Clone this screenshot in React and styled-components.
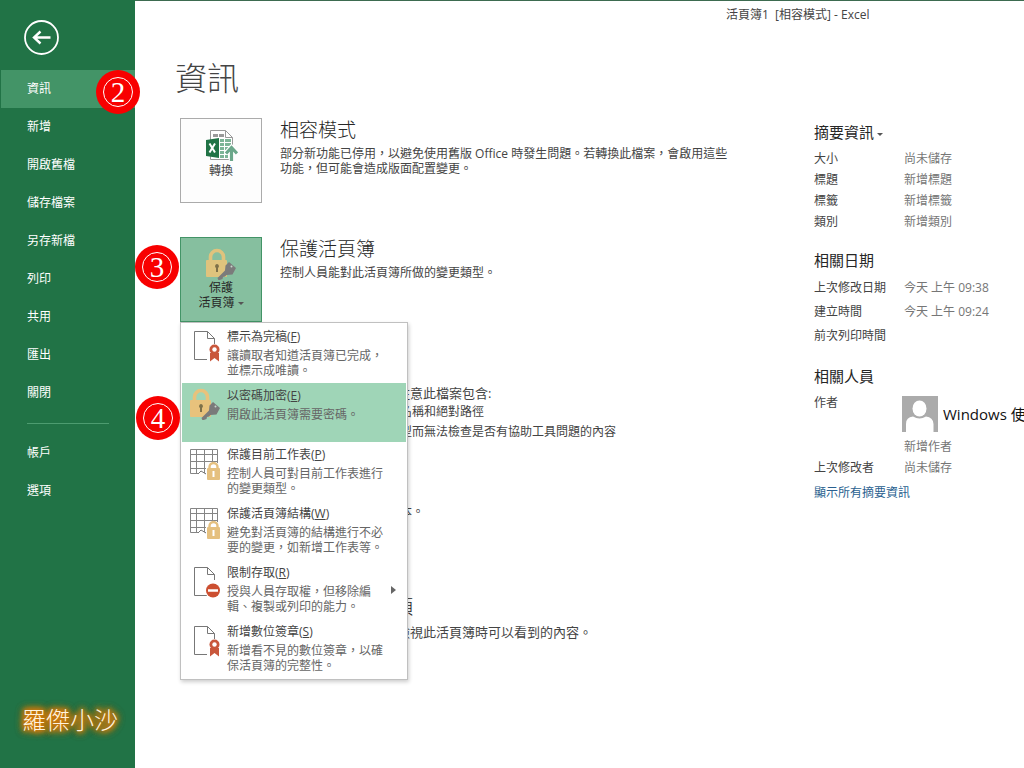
import React from "react";
import styled, { createGlobalStyle } from "styled-components";

const GlobalStyle = createGlobalStyle`
  * { box-sizing: border-box; }
  body {
    margin: 0;
    background: #fff;
    color: #444;
    font: 12px/15px "Open Sans", "Noto Sans CJK TC", sans-serif;
  }
  h1, h2, h3, p, ul, dl, dd { margin: 0; padding: 0; }
  ul { list-style: none; }
  button { font: inherit; color: inherit; cursor: pointer; }
`;

const Window = styled.div`
  display: flex;
  min-height: 100vh;
  overflow: hidden;
`;

const Sidebar = styled.aside`
  flex: 0 0 135px;
  display: flex;
  flex-direction: column;
  background: #217346;
  color: #fff;
`;

const BackButton = styled.button`
  display: block;
  width: 36px;
  height: 36px;
  margin: 19px 0 15px 23px;
  padding: 0;
  border: 0;
  background: none;
`;

const NavItem = styled.li`
  position: relative;
  margin-left: 1px;
`;

const NavButton = styled.button`
  display: block;
  width: 100%;
  height: 38px;
  padding: 0 0 2px 26px;
  border: 0;
  text-align: left;
  background: ${(p) => (p.$active ? "#439467" : "transparent")};
`;

const NavDivider = styled.li`
  height: 1px;
  margin: 11px 26px 10px 27px;
  background: #4d9c70;
`;

const Watermark = styled.div`
  margin: auto 0 30px 22px;
  color: #fff3dc;
  font-size: 24px;
  line-height: 36px;
  font-weight: 300;
  text-shadow: 0 0 5px #d47a0c, 0 0 5px #d47a0c, 0 0 6px #d47a0c, 0 0 6px #d47a0c,
    0 0 8px #d47a0c, 0 0 8px #d47a0c, 0 0 10px #d47a0c;
`;

const Main = styled.main`
  flex: 1;
  min-width: 0;
  border-top: 1px solid #3d6b50;
`;

const TitleBar = styled.header`
  height: 28px;
  padding-left: 591px;
  line-height: 28px;
  white-space: pre;
`;

const PageTitle = styled.h1`
  margin: 29px 0 20px 40px;
  font-size: 32px;
  line-height: 40px;
  font-weight: 300;
`;

const Columns = styled.div`
  display: flex;
  padding-left: 45px;
`;

const Sections = styled.div`
  flex: 1;
  min-width: 0;
  display: flex;
  flex-direction: column;
  gap: 34px;
`;

const Section = styled.section`
  display: grid;
  grid-template-columns: 82px minmax(0, 452px);
  column-gap: 18px;
  min-height: 85px;
`;

const TileHolder = styled.div`
  position: relative;
`;

const SectionBody = styled.div`
  grid-column: 2;
`;

const SectionTitle = styled.h2`
  margin-bottom: 4px;
  color: #262626;
  font-size: 19px;
  line-height: 24px;
  font-weight: 300;
`;

const LargeText = styled.p`
  font-size: 13px;
  line-height: 18px;
`;

const Findings = styled.ul`
  padding-left: 12px;
  line-height: 20px;
`;

const Tile = styled.button`
  display: flex;
  flex-direction: column;
  align-items: center;
  width: 82px;
  height: 85px;
  padding: 10px 0 0;
  border: 1px solid ${(p) => (p.$pressed ? "#439467" : "#ababab")};
  background: ${(p) => (p.$pressed ? "#86bf9f" : "#fdfdfd")};
  color: ${(p) => (p.$pressed ? "#262626" : "#444")};
`;

const Caret = styled.span`
  display: inline-block;
  margin-left: 3px;
  vertical-align: 2px;
  border: 3px solid transparent;
  border-top-color: #555;
  border-bottom: 0;
`;

const Badge = styled.span`
  position: absolute;
  z-index: 3;
  left: ${(p) => p.$left}px;
  top: ${(p) => p.$top}px;
  display: flex;
  align-items: center;
  justify-content: center;
  width: 44px;
  height: 44px;
  border-radius: 50%;
  background: #f80000;
  color: #fff;
`;

const BadgeRing = styled.span`
  width: 30px;
  height: 30px;
  border: 1px solid #fff;
  border-radius: 50%;
  font: 29px/28px "Liberation Serif", serif;
  text-align: center;
`;

const Menu = styled.ul`
  position: absolute;
  z-index: 2;
  top: 85px;
  left: 0;
  width: 228px;
  padding: 1px;
  border: 1px solid #c0c0c0;
  background: #fff;
  box-shadow: 1px 2px 4px rgba(0, 0, 0, 0.2);
`;

const MenuItem = styled.li`
  position: relative;
`;

const MenuButton = styled.button`
  display: grid;
  grid-template-columns: 32px 158px 1fr;
  column-gap: 6px;
  width: 100%;
  height: 59px;
  padding: 5px 0 0 7px;
  border: 0;
  align-items: start;
  text-align: left;
  background: ${(p) => (p.$selected ? "#9fd5b7" : "transparent")};
`;

const MenuTitle = styled.span`
  display: block;
  margin-bottom: 3px;
  line-height: 16px;
`;

const MenuText = styled.span`
  display: block;
  color: #666;
`;

const SubArrow = styled.span`
  align-self: center;
  justify-self: start;
  margin-bottom: 4px;
  border: 4px solid transparent;
  border-left: 5px solid #666;
  border-right: 0;
`;

const Summary = styled.aside`
  flex: 0 0 210px;
  min-width: 0;
  padding-top: 4px;
  overflow: hidden;
`;

const SummaryTitle = styled.h3`
  margin-bottom: 6px;
  color: #262626;
  font-size: 15px;
  line-height: 20px;
  font-weight: 400;
`;

const Facts = styled.dl`
  display: grid;
  grid-template-columns: 88px 1fr;
  margin-bottom: 18px;
  line-height: ${(p) => p.$row}px;
  white-space: nowrap;
`;

const FactValue = styled.dd`
  grid-column: 2;
  min-height: ${(p) => p.$row}px;
  padding-left: 2px;
  color: #767676;
`;

const Person = styled.dd`
  display: flex;
  align-items: center;
  gap: 5px;
  padding: 4px 0;
  color: #111;
  font-size: 15px;
`;

const People = styled(Facts)`
  margin-bottom: 5px;
`;

const AllLink = styled.a`
  color: #2a5f8f;
  line-height: 20px;
  text-decoration: none;
`;

const BackIcon = () => (
  <svg width="36" height="36" viewBox="0 0 36 36" fill="none" stroke="#fff" aria-hidden="true">
    <circle cx="18.500" cy="18.500" r="16.500" strokeWidth="1.800" />
    <path d="M27.500 18.500H12M17.500 12.500l-6.500 6 6.500 6" strokeWidth="2.400" />
  </svg>
);

const ConvertIcon = () => (
  <svg width="34" height="34" viewBox="0 0 34 34" aria-hidden="true">
    <path d="M6.500 1.500H21.500L28.500 8.500V30.500H6.500Z" fill="#fff" stroke="#999" />
    <path d="M21.500 1.500V8.500H28.500" fill="none" stroke="#999" />
    <path d="M9 5h5v3H9zM15 5h5v3h-5z" fill="#999" />
    <path d="M16 10h4v3h-4zM21 10h6v3h-6zM16 14h4v3h-4zM21 14h6v3h-6zM16 18h4v3h-4zM21 18h4v3h-4zM16 22h4v3h-4zM16 26h4v3h-4zM21 26h3v3h-3z" fill="#7db597" />
    <path d="M2 11L15 9V29L2 27Z" fill="#217346" />
    <path d="M5.500 14.500L11 23.500M11 14.500L5.500 23.500" stroke="#fff" strokeWidth="2" />
    <path d="M27.500 33V19M22 24.500l5.500-6 5.500 6" fill="none" stroke="#fff" strokeWidth="5.500" />
    <path d="M27.500 32V19M22 24.500l5.500-6 5.500 6" fill="none" stroke="#6ba78a" strokeWidth="3.200" />
  </svg>
);

const LockKeyIcon = ({ gold, steel }) => (
  <svg width="32" height="32" viewBox="0 0 32 32" aria-hidden="true">
    <path d="M5.500 13V9a6.500 6.500 0 0 1 13 0v4" fill="none" stroke={gold} strokeWidth="3.600" />
    <rect x="1" y="12" width="21" height="17" rx="1" fill={gold} />
    <path d="M12 16a2.200 2.200 0 0 1 1 4v4h-2v-4a2.200 2.200 0 0 1 1-4z" fill="#7e7049" />
    <path d="M24 14l7 6-3.500 6.500-6 .5-1.500 1.500-2 .5-.5 2-4 1.500-1-2.500 7.500-7.500.5-5z" fill={steel} />
    <circle cx="26.500" cy="18.500" r="1" fill="#c9d6cd" />
  </svg>
);

const PagePath = () => (
  <path d="M18.500 2.500H5.500V30.500H18M18.500 2.500L25.500 9.500V15M18.500 2.500V9.500H25.500" fill="none" stroke="#777" />
);

const RibbonIcon = () => (
  <svg width="32" height="34" viewBox="0 0 32 34" aria-hidden="true">
    <PagePath />
    <path d="M21 24h9v8.500l-4.500-3.500L21 32.500z" fill="#c9573c" />
    <circle cx="25.500" cy="20.500" r="5" fill="#c9573c" />
    <circle cx="25.500" cy="20.500" r="2.200" fill="#fff" />
  </svg>
);

const RestrictIcon = () => (
  <svg width="32" height="34" viewBox="0 0 32 34" aria-hidden="true">
    <PagePath />
    <circle cx="24" cy="25.500" r="8" fill="#fff" />
    <circle cx="24" cy="25.500" r="7" fill="#cc4f31" />
    <path d="M19 25.500h10" stroke="#fff" strokeWidth="2.500" />
  </svg>
);

const SheetLockIcon = () => (
  <svg width="32" height="34" viewBox="0 0 32 34" aria-hidden="true">
    <path d="M1.500 2.500H28.500V16M1.500 2.500V26.500H17M7.500 2.500V26M15.500 2.500V26M23.500 2.500V16M1.500 7.500H28.500M1.500 14.500H28.500M1.500 21.500H18" fill="none" stroke="#858585" />
    <path d="M9 27l3-3 5 3" fill="#fff" stroke="#777" />
    <path d="M17 18h15v15H17z" fill="#fff" />
    <path d="M20.500 22v-2a4 4 0 0 1 8 0V22" fill="none" stroke="#e5c07f" strokeWidth="2.400" />
    <rect x="18" y="21" width="13" height="12" rx="1" fill="#e5c07f" />
    <path d="M24.500 24v6" stroke="#fff" strokeWidth="2" />
  </svg>
);

const Avatar = () => (
  <svg width="36" height="36" viewBox="0 0 36 36" aria-hidden="true">
    <rect width="36" height="36" fill="#ababab" />
    <ellipse cx="17.500" cy="12.500" rx="7" ry="8" fill="#fff" />
    <path d="M4 36V28q0-7 7-7.500 6.500 4 13 0 7 .5 7.500 7.500V36z" fill="#fff" />
  </svg>
);

const NumberBadge = ({ n, left, top }) => (
  <Badge $left={left} $top={top}>
    <BadgeRing>{n}</BadgeRing>
  </Badge>
);

const menuEntries = [
  { title: "標示為完稿", hotkey: "F", text: "讓讀取者知道活頁簿已完成，並標示成唯讀。", icon: <RibbonIcon /> },
  { title: "以密碼加密", hotkey: "E", text: "開啟此活頁簿需要密碼。", icon: <LockKeyIcon gold="#e8c27c" steel="#7a7a7a" />, selected: true },
  { title: "保護目前工作表", hotkey: "P", text: "控制人員可對目前工作表進行的變更類型。", icon: <SheetLockIcon /> },
  { title: "保護活頁簿結構", hotkey: "W", text: "避免對活頁簿的結構進行不必要的變更，如新增工作表等。", icon: <SheetLockIcon /> },
  { title: "限制存取", hotkey: "R", text: "授與人員存取權，但移除編輯、複製或列印的能力。", icon: <RestrictIcon />, submenu: true },
  { title: "新增數位簽章", hotkey: "S", text: "新增看不見的數位簽章，以確保活頁簿的完整性。", icon: <RibbonIcon /> },
];

const fileCommands = ["資訊", "新增", "開啟舊檔", "儲存檔案", "另存新檔", "列印", "共用", "匯出", "關閉"];
const appCommands = ["帳戶", "選項"];

const properties = [["大小", "尚未儲存"], ["標題", "新增標題"], ["標籤", "新增標籤"], ["類別", "新增類別"]];
const dates = [["上次修改日期", "今天 上午 09:38"], ["建立時間", "今天 上午 09:24"], ["前次列印時間", ""]];

const FactList = ({ rows, row }) => (
  <Facts $row={row}>
    {rows.map(([label, value]) => (
      <React.Fragment key={label}>
        <dt>{label}</dt>
        <FactValue $row={row}>{value}</FactValue>
      </React.Fragment>
    ))}
  </Facts>
);

export default function App() {
  return (
    <Window lang="zh-Hant">
      <GlobalStyle />
      <Sidebar>
        <BackButton aria-label="返回"><BackIcon /></BackButton>
        <nav>
          <ul>
            {fileCommands.map((name, i) => (
              <NavItem key={name}>
                <NavButton $active={i === 0}>{name}</NavButton>
                {i === 0 && <NumberBadge n="2" left={95} top={0} />}
              </NavItem>
            ))}
            <NavDivider role="separator" />
            {appCommands.map((name) => (
              <NavItem key={name}><NavButton>{name}</NavButton></NavItem>
            ))}
          </ul>
        </nav>
        <Watermark>羅傑小沙</Watermark>
      </Sidebar>
      <Main>
        <TitleBar>{"活頁簿1  [相容模式] - Excel"}</TitleBar>
        <PageTitle>資訊</PageTitle>
        <Columns>
          <Sections>
            <Section>
              <Tile><ConvertIcon />轉換</Tile>
              <SectionBody>
                <SectionTitle>相容模式</SectionTitle>
                <p>部分新功能已停用，以避免使用舊版 Office 時發生問題。若轉換此檔案，會啟用這些功能，但可能會造成版面配置變更。</p>
              </SectionBody>
            </Section>
            <Section>
              <TileHolder>
                <Tile $pressed aria-haspopup="menu" aria-expanded="true">
                  <LockKeyIcon gold="#dfc37d" steel="#7b7b7b" />
                  <span>保護</span>
                  <span>活頁簿<Caret /></span>
                </Tile>
                <NumberBadge n="3" left={-45} top={8} />
                <Menu>
                  {menuEntries.map((m) => (
                    <MenuItem key={m.title}>
                      <MenuButton $selected={m.selected}>
                        {m.icon}
                        <span>
                          <MenuTitle>{m.title}(<u>{m.hotkey}</u>)</MenuTitle>
                          <MenuText>{m.text}</MenuText>
                        </span>
                        {m.submenu && <SubArrow />}
                      </MenuButton>
                      {m.selected && <NumberBadge n="4" left={-46} top={13} />}
                    </MenuItem>
                  ))}
                </Menu>
              </TileHolder>
              <SectionBody>
                <SectionTitle>保護活頁簿</SectionTitle>
                <p>控制人員能對此活頁簿所做的變更類型。</p>
              </SectionBody>
            </Section>
            <Section>
              <SectionBody>
                <SectionTitle>檢查活頁簿</SectionTitle>
                <LargeText>在發佈此檔案前，請注意此檔案包含:</LargeText>
                <Findings>
                  <li>文件摘要資訊、作者名稱和絕對路徑</li>
                  <li>將因為目前的檔案類型而無法檢查是否有協助工具問題的內容</li>
                </Findings>
              </SectionBody>
            </Section>
            <Section>
              <SectionBody>
                <SectionTitle>版本</SectionTitle>
                <p>這個檔案沒有先前的版本。</p>
              </SectionBody>
            </Section>
            <Section>
              <SectionBody>
                <SectionTitle>瀏覽器檢視選項</SectionTitle>
                <LargeText>挑選使用者在網路上檢視此活頁簿時可以看到的內容。</LargeText>
              </SectionBody>
            </Section>
          </Sections>
          <Summary>
            <SummaryTitle>摘要資訊<Caret /></SummaryTitle>
            <FactList rows={properties} row={21} />
            <SummaryTitle>相關日期</SummaryTitle>
            <FactList rows={dates} row={24} />
            <SummaryTitle>相關人員</SummaryTitle>
            <People $row={21}>
              <dt>作者</dt>
              <Person><Avatar />Windows 使用者</Person>
              <FactValue $row={21}>新增作者</FactValue>
              <dt>上次修改者</dt>
              <FactValue $row={21}>尚未儲存</FactValue>
            </People>
            <AllLink href="#properties">顯示所有摘要資訊</AllLink>
          </Summary>
        </Columns>
      </Main>
    </Window>
  );
}
